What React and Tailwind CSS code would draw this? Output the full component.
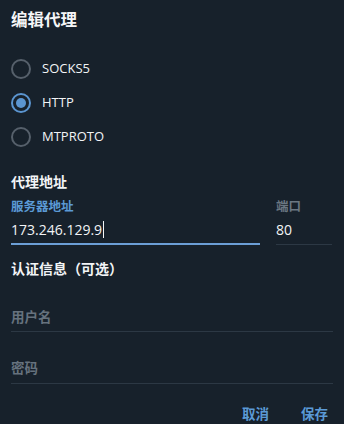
export default function App() {
  const font = { fontFamily: '"Open Sans", "Noto Sans CJK SC", sans-serif' };
  const Radio = ({ label, checked }) => (
    <div className="flex items-center h-[34px]">
      <div
        className={`w-[20px] h-[20px] rounded-full border-2 flex items-center justify-center ${
          checked ? "border-[#5b95d0]" : "border-[#56606b]"
        }`}
      >
        {checked && <div className="w-[10px] h-[10px] rounded-full bg-[#5b95d0]" />}
      </div>
      <span className="ml-[11px] text-[13px] text-[#f2f4f6]">{label}</span>
    </div>
  );
  return (
    <div className="w-[344px] h-[424px] bg-[#17212b] overflow-hidden px-[11px]" style={font}>
      <div className="pt-[8px] h-[34px] text-[16.5px] font-bold text-[#f5f6f7] leading-[24px]">编辑代理</div>
      <div className="mt-[18px] flex flex-col">
        <Radio label="SOCKS5" />
        <Radio label="HTTP" checked />
        <Radio label="MTPROTO" />
      </div>
      <div className="mt-[18px] text-[14px] font-bold text-[#f2f4f6] leading-[20px]">代理地址</div>
      <div className="mt-[6px] flex gap-[16px]">
        <div className="w-[249px] flex flex-col">
          <div className="text-[12.5px] font-bold text-[#5b9ad6] leading-[18px]">服务器地址</div>
          <div className="mt-[2px] h-[22px] flex items-center text-[14px] text-[#f2f4f6]">
            173.246.129.9<span className="inline-block w-[1px] h-[17px] bg-[#f2f4f6] ml-[1px]" />
          </div>
          <div className="mt-[3px] h-[2px] bg-[#6c9fd6]" />
        </div>
        <div className="flex-1 flex flex-col pr-[1px]">
          <div className="text-[12.5px] font-bold text-[#6b7783] leading-[18px]">端口</div>
          <div className="mt-[2px] h-[22px] flex items-center text-[14px] text-[#f2f4f6]">80</div>
          <div className="mt-[4px] h-[1px] bg-[#2c3844]" />
        </div>
      </div>
      <div className="mt-[14px] text-[14px] font-bold text-[#f2f4f6] leading-[20px]">认证信息（可选）</div>
      <div className="mt-[28px] text-[13.5px] font-bold text-[#66727e] leading-[20px]">用户名</div>
      <div className="mt-[4px] h-[1px] bg-[#2c3844]" />
      <div className="mt-[26px] text-[13.5px] font-bold text-[#66727e] leading-[20px]">密码</div>
      <div className="mt-[5px] h-[1px] bg-[#2c3844]" />
      <div className="mt-[20px] flex justify-end gap-[32px] pr-[5px] text-[13.5px] font-bold text-[#5b9ad6] leading-[20px]">
        <span>取消</span>
        <span>保存</span>
      </div>
    </div>
  );
}
